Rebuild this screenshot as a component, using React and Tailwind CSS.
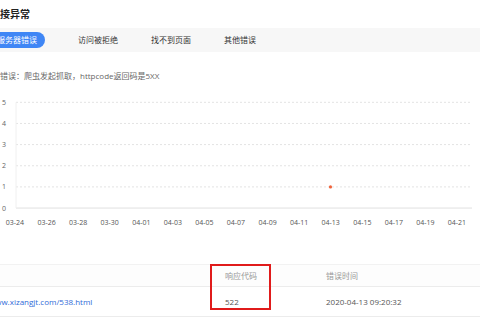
import React from 'react';

const tabs = ['服务器错误', '访问被拒绝', '找不到页面', '其他错误'];
const xLabels = ['03-24', '03-26', '03-28', '03-30', '04-01', '04-03', '04-05', '04-07', '04-09', '04-11', '04-13', '04-15', '04-17', '04-19', '04-21'];
const yTicks = [5, 4, 3, 2, 1, 0];

const ErrorChart = () => {
  // chart area in page coords, svg starts at y=90
  const top = 12.3;
  const step = 21.15;
  const axisY = top + step * 5;
  return (
    <svg width="480" height="140" className="block">
      {yTicks.map((t, i) => {
        const y = top + step * i;
        return (
          <g key={t}>
            {t !== 0 && (
              <line x1="16" x2="470" y1={y} y2={y} stroke="#e3e3e3" strokeWidth="1" strokeDasharray="2 2" />
            )}
            <text x="2" y={y + 2.5} fontSize="7" fill="#666">{t}</text>
          </g>
        );
      })}
      <line x1="16" x2="472" y1={axisY} y2={axisY} stroke="#e0e0e0" strokeWidth="1" />
      <line x1="16" x2="16" y1={top} y2={axisY} stroke="#f0f0f0" strokeWidth="1" />
      {xLabels.map((l, i) => (
        <text key={l} x={15 + i * 31.57} y="134.5" fontSize="7" fill="#555" textAnchor="middle">{l}</text>
      ))}
      <circle cx="330.5" cy={top + step * 4} r="1.6" fill="#f0643c" />
    </svg>
  );
};

export default function App() {
  return (
    <div className="w-[480px] h-[320px] overflow-hidden bg-white text-[#333]" style={{ fontFamily: '"Open Sans", "Noto Sans CJK SC", sans-serif' }}>
      <div className="h-[28px] flex items-center">
        <h1 className="-ml-[10px] text-[10px] font-bold text-[#222]">连接异常</h1>
      </div>

      <div className="h-[24px] bg-[#f7f7f7] flex items-center">
        <div className="flex items-center -ml-[11px]">
          {tabs.map((t, i) => (
            <div
              key={t}
              className={i === 0
                ? 'h-[16px] px-[8px] rounded-full bg-[#3f86f5] text-white text-[8px] flex items-center'
                : 'ml-[33px] text-[8px] text-[#333]'}
            >
              {t}
            </div>
          ))}
        </div>
      </div>

      <p className="mt-[18px] h-[12px] leading-[12px] text-[8px] text-[#666] -ml-[0px]">错误：爬虫发起抓取，httpcode返回码是5XX</p>

      <div className="mt-[8px]">
        <ErrorChart />
      </div>

      <div className="relative mt-[34px] text-[8px]">
        <div className="grid grid-cols-[225px_101px_1fr] h-[23px] items-center border-t border-[#f2f2f2] border-b border-b-[#ececec] bg-[#fdfdfd] text-[#999]">
          <span></span>
          <span>响应代码</span>
          <span>错误时间</span>
        </div>
        <div className="grid grid-cols-[225px_101px_1fr] h-[30px] items-center border-b border-[#ececec] text-[#555]">
          <span className="-ml-[11px] text-[#2f6bd8]">www.xizangjt.com/538.html</span>
          <span>522</span>
          <span>2020-04-13 09:20:32</span>
        </div>
        <div className="absolute left-[210px] top-0 w-[61px] h-[46px] border-2 border-[#e01b1b]"></div>
      </div>
    </div>
  );
}
